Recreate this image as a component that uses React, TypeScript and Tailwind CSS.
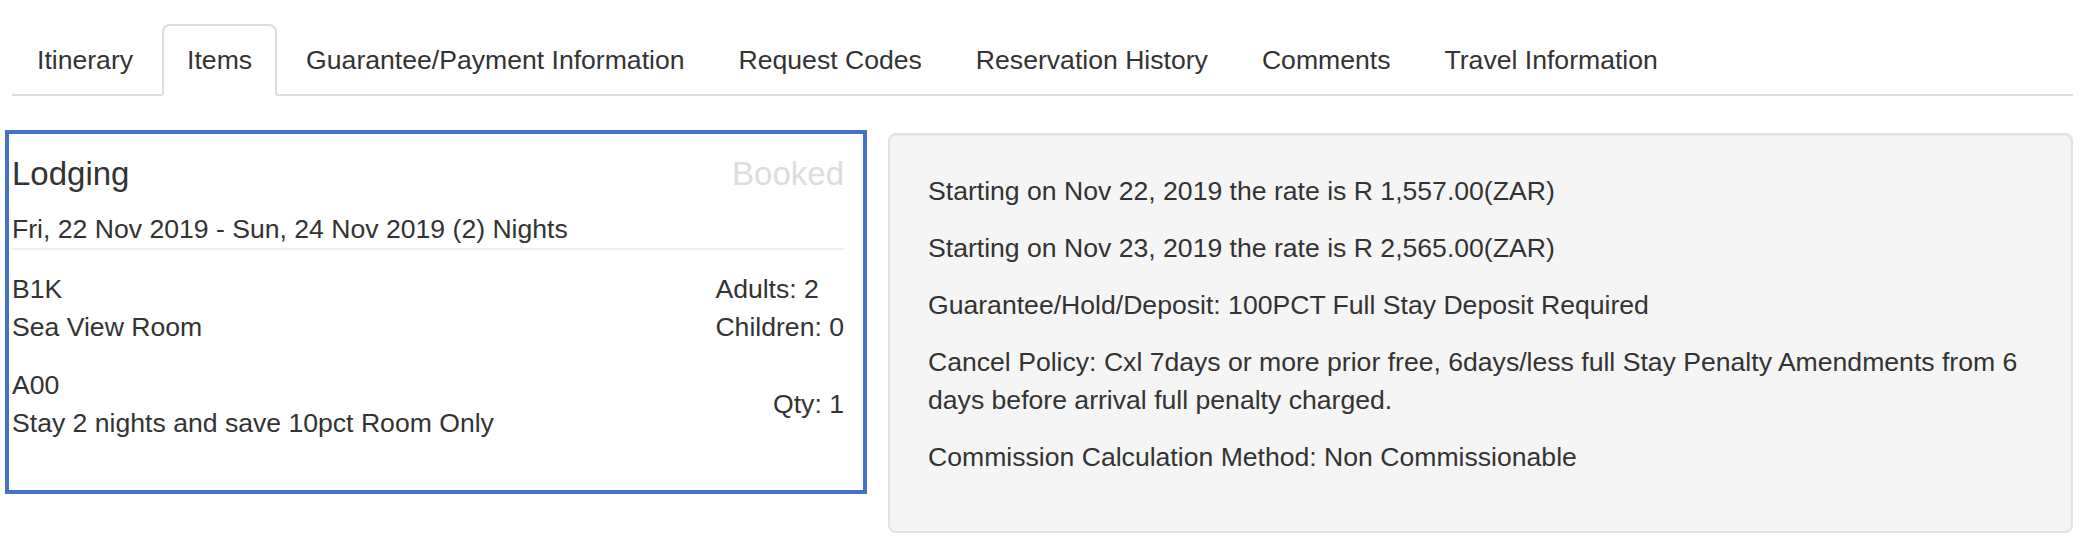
const tabs = [
  "Itinerary",
  "Items",
  "Guarantee/Payment Information",
  "Request Codes",
  "Reservation History",
  "Comments",
  "Travel Information",
];

const rateNotes = [
  "Starting on Nov 22, 2019 the rate is R 1,557.00(ZAR)",
  "Starting on Nov 23, 2019 the rate is R 2,565.00(ZAR)",
  "Guarantee/Hold/Deposit: 100PCT Full Stay Deposit Required",
  "Cancel Policy: Cxl 7days or more prior free, 6days/less full Stay Penalty Amendments from 6 days before arrival full penalty charged.",
  "Commission Calculation Method: Non Commissionable",
];

function Tabs({ active }: { active: string }) {
  return (
    <ul className="ml-[7px] flex border-b-2 border-[#ddd]">
      {tabs.map((t) => (
        <li key={t} className="-mb-[2px] mr-[4px]">
          <a
            href="#"
            className={
              t === active
                ? "block rounded-t-[8px] border-2 border-[#ddd] border-b-transparent bg-white px-[23px] pt-[15px] pb-[15px] leading-[38px] text-[#333]"
                : "block rounded-t-[8px] border-2 border-transparent px-[23px] pt-[15px] pb-[15px] leading-[38px] text-[#333]"
            }
          >
            {t}
          </a>
        </li>
      ))}
    </ul>
  );
}

function LodgingCard() {
  return (
    <div className="w-[862px] shrink-0 border-4 border-[#4472c4] pl-[3px] pr-[19px] pt-[21px] pb-[48px]">
      <div className="flex items-baseline justify-between text-[33px] leading-[37px]">
        <h4 className="text-[#333]">Lodging</h4>
        <span className="text-[#ddd]">Booked</span>
      </div>
      <div className="mt-[18px] border-b-2 border-[#eee]">
        Fri, 22 Nov 2019 - Sun, 24 Nov 2019 (2) Nights
      </div>

      <div className="mt-[20px] flex justify-between">
        <div>
          <div>B1K</div>
          <div>Sea View Room</div>
        </div>
        <div>
          <div>Adults: 2</div>
          <div>Children: 0</div>
        </div>
      </div>

      <div className="mt-[20px] flex items-center justify-between">
        <div>
          <div>A00</div>
          <div>Stay 2 nights and save 10pct Room Only</div>
        </div>
        <div>Qty: 1</div>
      </div>
    </div>
  );
}

function RateNotes() {
  return (
    <div className="mt-[3px] flex-1 rounded-[8px] border-2 border-[#e3e3e3] bg-[#f5f5f5] pt-[37px] pb-[36px] pl-[38px] pr-[34px] shadow-[inset_0_1px_1px_rgba(0,0,0,0.05)]">
      {rateNotes.map((n) => (
        <p key={n} className="mb-[19px]">
          {n}
        </p>
      ))}
    </div>
  );
}

export default function App() {
  return (
    <div className="min-h-[539px] bg-white pt-[24px] pl-[5px] pr-[13px] font-['Liberation_Sans',Arial,sans-serif] text-[26.6px] leading-[38px] text-[#333]">
      <Tabs active="Items" />
      <div className="mt-[34px] flex items-start gap-[21px]">
        <LodgingCard />
        <RateNotes />
      </div>
    </div>
  );
}
